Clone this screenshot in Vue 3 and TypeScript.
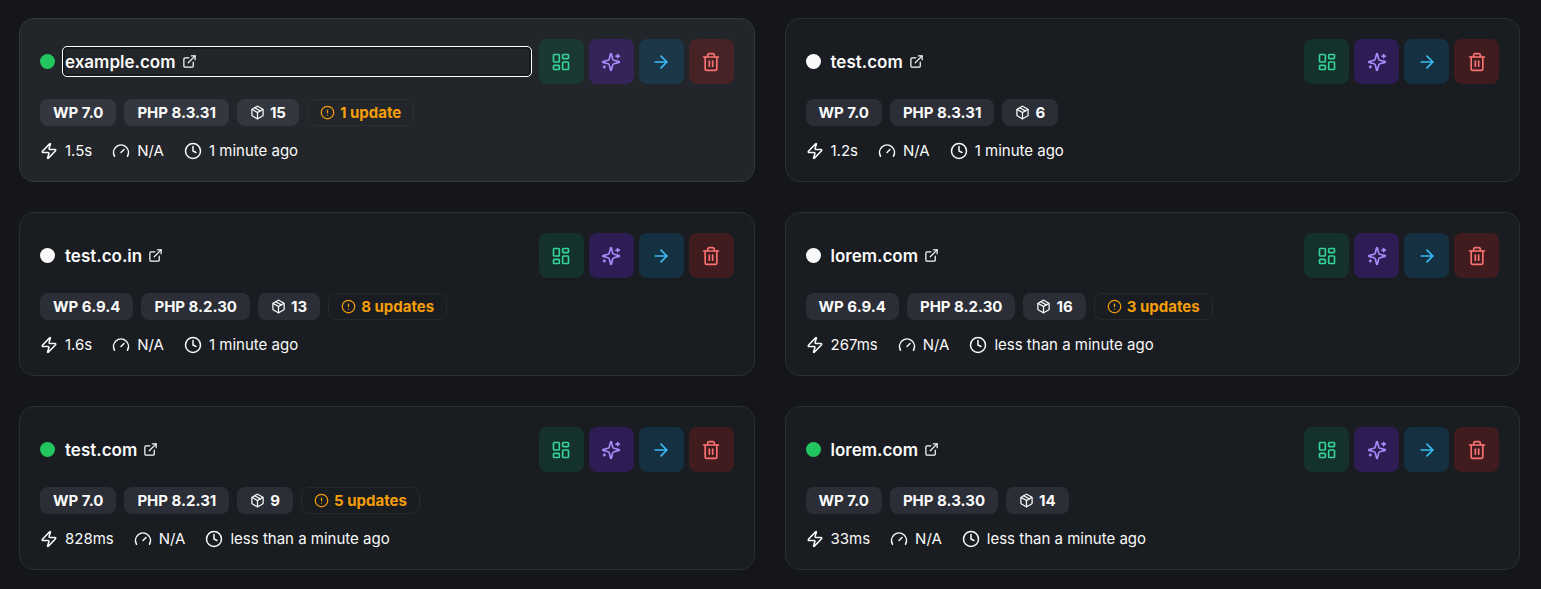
<script setup lang="ts">
type IconName = 'external' | 'package' | 'alert' | 'zap' | 'gauge' | 'clock' | 'dashboard' | 'sparkles' | 'arrow' | 'trash'

interface Site {
  id: number
  domain: string
  online: boolean
  active: boolean
  wp: string
  php: string
  plugins: number
  updates: number
  response: string
  score: string
  checked: string
}

const icons: Record<IconName, string[]> = {
  external: ['M15 3h6v6', 'M10 14 21 3', 'M18 13v6a2 2 0 0 1-2 2H5a2 2 0 0 1-2-2V8a2 2 0 0 1 2-2h6'],
  package: [
    'M11 21.73a2 2 0 0 0 2 0l7-4A2 2 0 0 0 21 16V8a2 2 0 0 0-1-1.73l-7-4a2 2 0 0 0-2 0l-7 4A2 2 0 0 0 3 8v8a2 2 0 0 0 1 1.73z',
    'M12 22V12',
    'M3.29 7 12 12l8.71-5',
    'm7.5 4.27 9 5.15',
  ],
  alert: ['M12 2a10 10 0 1 0 0 20a10 10 0 1 0 0-20z', 'M12 8v4', 'M12 16h.01'],
  zap: ['M4 14a1 1 0 0 1-.78-1.63l9.9-10.2a.5.5 0 0 1 .86.46l-1.92 6.02A1 1 0 0 0 13 10h7a1 1 0 0 1 .78 1.63l-9.9 10.2a.5.5 0 0 1-.86-.46l1.92-6.02A1 1 0 0 0 11 14z'],
  gauge: ['m12 14 4-4', 'M3.34 19a10 10 0 1 1 17.32 0'],
  clock: ['M12 2a10 10 0 1 0 0 20a10 10 0 1 0 0-20z', 'M12 6v6l4 2'],
  dashboard: [
    'M4 3h5a1 1 0 0 1 1 1v7a1 1 0 0 1-1 1H4a1 1 0 0 1-1-1V4a1 1 0 0 1 1-1z',
    'M15 3h5a1 1 0 0 1 1 1v3a1 1 0 0 1-1 1h-5a1 1 0 0 1-1-1V4a1 1 0 0 1 1-1z',
    'M15 12h5a1 1 0 0 1 1 1v7a1 1 0 0 1-1 1h-5a1 1 0 0 1-1-1v-7a1 1 0 0 1 1-1z',
    'M4 16h5a1 1 0 0 1 1 1v3a1 1 0 0 1-1 1H4a1 1 0 0 1-1-1v-3a1 1 0 0 1 1-1z',
  ],
  sparkles: [
    'M9.937 15.5A2 2 0 0 0 8.5 14.063l-6.135-1.582a.5.5 0 0 1 0-.962L8.5 9.936A2 2 0 0 0 9.937 8.5l1.582-6.135a.5.5 0 0 1 .963 0L14.063 8.5A2 2 0 0 0 15.5 9.937l6.135 1.581a.5.5 0 0 1 0 .964L15.5 14.063a2 2 0 0 0-1.437 1.437l-1.582 6.135a.5.5 0 0 1-.963 0z',
    'M20 3v4',
    'M22 5h-4',
    'M4 17v2',
    'M5 18H3',
  ],
  arrow: ['M5 12h14', 'm12 5 7 7-7 7'],
  trash: ['M3 6h18', 'M19 6v14a2 2 0 0 1-2 2H7a2 2 0 0 1-2-2V6', 'M8 6V4a2 2 0 0 1 2-2h4a2 2 0 0 1 2 2v2', 'M10 11v6', 'M14 11v6'],
}

const actions: { icon: IconName; label: string }[] = [
  { icon: 'dashboard', label: 'Open dashboard' },
  { icon: 'sparkles', label: 'Optimize' },
  { icon: 'arrow', label: 'View details' },
  { icon: 'trash', label: 'Delete site' },
]

const sites: Site[] = [
  { id: 1, domain: 'example.com', online: true, active: true, wp: '7.0', php: '8.3.31', plugins: 15, updates: 1, response: '1.5s', score: 'N/A', checked: '1 minute ago' },
  { id: 2, domain: 'test.com', online: false, active: false, wp: '7.0', php: '8.3.31', plugins: 6, updates: 0, response: '1.2s', score: 'N/A', checked: '1 minute ago' },
  { id: 3, domain: 'test.co.in', online: false, active: false, wp: '6.9.4', php: '8.2.30', plugins: 13, updates: 8, response: '1.6s', score: 'N/A', checked: '1 minute ago' },
  { id: 4, domain: 'lorem.com', online: false, active: false, wp: '6.9.4', php: '8.2.30', plugins: 16, updates: 3, response: '267ms', score: 'N/A', checked: 'less than a minute ago' },
  { id: 5, domain: 'test.com', online: true, active: false, wp: '7.0', php: '8.2.31', plugins: 9, updates: 5, response: '828ms', score: 'N/A', checked: 'less than a minute ago' },
  { id: 6, domain: 'lorem.com', online: true, active: false, wp: '7.0', php: '8.3.30', plugins: 14, updates: 0, response: '33ms', score: 'N/A', checked: 'less than a minute ago' },
]

function stats(site: Site): { icon: IconName; text: string }[] {
  return [
    { icon: 'zap', text: site.response },
    { icon: 'gauge', text: site.score },
    { icon: 'clock', text: site.checked },
  ]
}
</script>

<template>
  <main class="sites">
    <article v-for="site in sites" :key="site.id" class="card" :class="{ active: site.active }">
      <header class="head">
        <span class="dot" :class="{ online: site.online }"></span>
        <a class="domain" :class="{ focused: site.active }" href="#">
          <span class="name">{{ site.domain }}</span>
          <svg class="icon small" viewBox="0 0 24 24" aria-hidden="true">
            <path v-for="d in icons.external" :key="d" :d="d" />
          </svg>
        </a>
        <div class="actions">
          <button v-for="a in actions" :key="a.icon" type="button" class="action" :class="a.icon" :aria-label="a.label">
            <svg class="icon large" viewBox="0 0 24 24" aria-hidden="true">
              <path v-for="d in icons[a.icon]" :key="d" :d="d" />
            </svg>
          </button>
        </div>
      </header>
      <div class="chips">
        <span class="chip">WP {{ site.wp }}</span>
        <span class="chip">PHP {{ site.php }}</span>
        <span class="chip">
          <svg class="icon small" viewBox="0 0 24 24" aria-hidden="true">
            <path v-for="d in icons.package" :key="d" :d="d" />
          </svg>
          {{ site.plugins }}
        </span>
        <span v-if="site.updates" class="chip warn">
          <svg class="icon small" viewBox="0 0 24 24" aria-hidden="true">
            <path v-for="d in icons.alert" :key="d" :d="d" />
          </svg>
          {{ site.updates }} {{ site.updates === 1 ? 'update' : 'updates' }}
        </span>
      </div>
      <div class="stats">
        <span v-for="s in stats(site)" :key="s.icon" class="stat">
          <svg class="icon" viewBox="0 0 24 24" aria-hidden="true">
            <path v-for="d in icons[s.icon]" :key="d" :d="d" />
          </svg>
          {{ s.text }}
        </span>
      </div>
    </article>
  </main>
</template>

<style>
body {
  background: #15161a;
}
</style>

<style scoped>
.sites {
  display: grid;
  grid-template-columns: repeat(2, minmax(0, 1fr));
  gap: 30px;
  padding: 18px 21px 18px 19px;
  font-family: Inter, "Liberation Sans", sans-serif;
  font-size: 15px;
  line-height: 20px;
  color: #fafafa;
}
.card {
  display: flex;
  flex-direction: column;
  gap: 15px;
  padding: 20px;
  border: 1px solid #2b2e35;
  border-radius: 15px;
  background: #191c20;
}
.card.active {
  background: #222529;
  border-color: #33363d;
}
.head {
  display: flex;
  align-items: center;
  gap: 10px;
}
.dot {
  flex: none;
  width: 15px;
  height: 15px;
  border-radius: 50%;
  background: #fafafa;
}
.dot.online {
  background: #22c55e;
}
.domain {
  flex: 1;
  min-width: 0;
  display: flex;
  align-items: center;
  gap: 6px;
  font-size: 17px;
  line-height: 23px;
  font-weight: 600;
  color: inherit;
  text-decoration: none;
}
.name {
  padding-top: 2px;
}
.domain.focused {
  border-radius: 2px;
  outline: 1px solid #fff;
  outline-offset: 2px;
  box-shadow: 0 0 0 2px #18191b;
}
.actions {
  display: flex;
  gap: 5px;
}
.action {
  display: flex;
  align-items: center;
  justify-content: center;
  width: 45px;
  height: 45px;
  padding: 0;
  border: 0;
  border-radius: 8px;
  cursor: pointer;
}
.dashboard {
  color: #34d399;
  background: rgba(0, 150, 100, 0.18);
}
.sparkles {
  color: #a78bfa;
  background: rgba(110, 32, 240, 0.25);
}
.arrow {
  color: #38bdf8;
  background: rgba(0, 132, 200, 0.2);
}
.trash {
  color: #f87171;
  background: rgba(220, 30, 30, 0.2);
}
.icon {
  flex: none;
  width: 18px;
  height: 18px;
  fill: none;
  stroke: currentColor;
  stroke-width: 2;
  stroke-linecap: round;
  stroke-linejoin: round;
}
.icon.small {
  width: 15px;
  height: 15px;
}
.icon.large {
  width: 20px;
  height: 20px;
}
.chips {
  display: flex;
  gap: 8px;
}
.chip {
  display: inline-flex;
  align-items: center;
  gap: 5px;
  padding: 3px 13px;
  border-radius: 8px;
  line-height: 21px;
  font-weight: 700;
  background: #2b2e37;
}
.active .chip {
  background: #343740;
}
.chip.warn,
.active .chip.warn {
  padding: 2px 12px;
  border: 1px solid #25282d;
  background: transparent;
  color: #f59e0b;
}
.active .chip.warn {
  border-color: #2c2f34;
}
.stats {
  display: flex;
  gap: 20px;
}
.stat {
  display: inline-flex;
  align-items: center;
  gap: 7px;
}
</style>
